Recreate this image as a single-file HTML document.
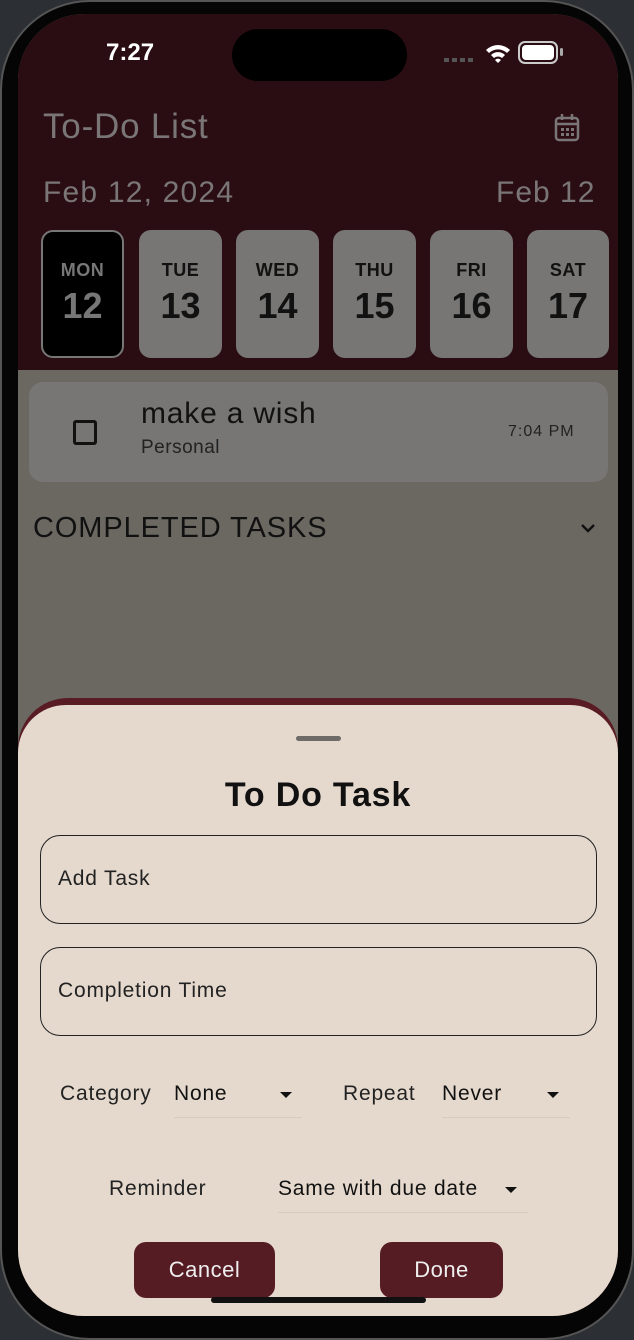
<!DOCTYPE html>
<html><head><meta charset="utf-8"><style>
*{margin:0;padding:0;box-sizing:border-box}
body{width:634px;height:1326px;overflow:hidden;background:#2c2f33;font-family:"Liberation Sans",sans-serif;position:relative}
.a{position:absolute}
#frame{left:0;top:0;width:634px;height:1340px;background:#050505;border-radius:90px;border:2px solid #555}
#screen{left:18px;top:14px;width:600px;height:1302px;border-radius:66px;overflow:hidden;background:#6b6861}
.day{position:absolute;top:216px;width:83px;height:128px;border-radius:12px;background:#777675;text-align:center;color:#111}
.day .d{font-size:18px;font-weight:bold;margin-top:30px;letter-spacing:.5px}
.day .n{font-size:36px;font-weight:bold;margin-top:4px}
.field{position:absolute;left:22px;width:557px;height:89px;border:1.5px solid #222;border-radius:20px;font-size:21px;color:#222;padding-left:17px;line-height:86px;letter-spacing:.8px}
.btn{position:absolute;top:1228px;height:56px;background:#561c24;border-radius:12px;color:#eee;font-size:22px;text-align:center;line-height:56px;letter-spacing:.5px}
.lab{position:absolute;font-size:21px;color:#222;letter-spacing:.8px}
.val{position:absolute;font-size:21px;color:#111;letter-spacing:.8px;border-bottom:1px solid #d6cbbf;height:36px}
.tri{position:absolute;width:0;height:0;border-left:6px solid transparent;border-right:6px solid transparent;border-top:6px solid #111}
</style></head><body>
<div id="frame" class="a"></div>
<div id="screen" class="a">
  <div class="a" style="left:0;top:0;width:600px;height:356px;background:#2a0d12"></div>
  <div class="a" style="left:214px;top:15px;width:175px;height:52px;border-radius:26px;background:#000"></div>
  <div class="a" style="left:88px;top:25px;font-size:24px;font-weight:bold;color:#fff">7:27</div>
  <div class="a" style="left:426px;top:44px;width:30px;height:4px;background:repeating-linear-gradient(90deg,#555 0 5px,transparent 5px 8px)"></div>
  <svg class="a" style="left:466px;top:28px" width="28" height="22" viewBox="0 0 28 22"><path d="M2 8 A17 17 0 0 1 26 8 L23 11 A13 13 0 0 0 5 11Z M7 13 A10 10 0 0 1 21 13 L18 16 A6 6 0 0 0 10 16Z M11 18 A4 4 0 0 1 17 18 L14 21Z" fill="#fff"/></svg>
  <div class="a" style="left:500px;top:27px;width:40px;height:23px;border:2px solid #ccc;border-radius:7px;padding:2px"><div style="width:100%;height:100%;background:#fff;border-radius:4px"></div></div>
  <div class="a" style="left:542px;top:34px;width:3px;height:8px;background:#aaa;border-radius:2px"></div>
  <div class="a" style="left:25px;top:93px;font-size:35px;color:#7a7677;letter-spacing:.8px">To-Do List</div>
  <svg class="a" style="left:535px;top:98px" width="30" height="32" viewBox="0 0 30 32" fill="none" stroke="#7a7677" stroke-width="2.5"><rect x="3" y="6" width="22" height="22" rx="3"/><path d="M3 12h22M9 2v6M19 2v6"/><g fill="#7a7677" stroke="none"><rect x="8" y="16" width="3" height="3"/><rect x="13" y="16" width="3" height="3"/><rect x="18" y="16" width="3" height="3"/><rect x="8" y="21" width="3" height="3"/><rect x="13" y="21" width="3" height="3"/><rect x="18" y="21" width="3" height="3"/></g></svg>
  <div class="a" style="left:25px;top:162px;font-size:30px;color:#7a7677;letter-spacing:1.2px">Feb 12, 2024</div>
  <div class="a" style="left:478px;top:162px;font-size:30px;color:#7a7677;letter-spacing:1px">Feb 12</div>
  <div class="day" style="left:23px;background:#000;border:2px solid #777;color:#777"><div class="d" style="margin-top:28px">MON</div><div class="n">12</div></div>
  <div class="day" style="left:121px"><div class="d">TUE</div><div class="n">13</div></div>
  <div class="day" style="left:218px"><div class="d">WED</div><div class="n">14</div></div>
  <div class="day" style="left:315px"><div class="d">THU</div><div class="n">15</div></div>
  <div class="day" style="left:412px"><div class="d">FRI</div><div class="n">16</div></div>
  <div class="day" style="left:509px;width:82px"><div class="d">SAT</div><div class="n">17</div></div>
  <div class="a" style="left:11px;top:368px;width:579px;height:100px;border-radius:14px;background:#777675"></div>
  <div class="a" style="left:55px;top:406px;width:24px;height:25px;border:3px solid #111;border-radius:3px"></div>
  <div class="a" style="left:123px;top:383px;font-size:30px;color:#111;letter-spacing:.8px">make a wish</div>
  <div class="a" style="left:123px;top:423px;font-size:19px;color:#222;letter-spacing:.5px">Personal</div>
  <div class="a" style="left:490px;top:409px;font-size:16px;color:#222;letter-spacing:1px">7:04 PM</div>
  <div class="a" style="left:15px;top:498px;font-size:29px;color:#111;letter-spacing:.9px">COMPLETED TASKS</div>
  <svg class="a" style="left:562px;top:508px" width="16" height="12" viewBox="0 0 16 12"><path d="M2 3l6 6 6-6" stroke="#111" stroke-width="2.5" fill="none"/></svg>
  <div class="a" style="left:0;top:684px;width:600px;height:700px;background:#5a1c24;border-radius:50px 50px 0 0"></div>
  <div class="a" style="left:0;top:691px;width:600px;height:700px;background:#e5d9cd;border-radius:48px 48px 0 0">
    <div class="a" style="left:278px;top:31px;width:45px;height:5px;border-radius:3px;background:#6e6a68"></div>
  </div>
  <div class="a" style="left:0;top:762px;width:600px;text-align:center;font-size:34px;font-weight:bold;color:#111;letter-spacing:.8px">To Do Task</div>
  <div class="field" style="top:821px">Add Task</div>
  <div class="field" style="top:933px">Completion Time</div>
  <div class="lab" style="left:42px;top:1068px">Category</div>
  <div class="val" style="left:156px;top:1068px;width:128px">None</div>
  <div class="tri" style="left:262px;top:1078px"></div>
  <div class="lab" style="left:325px;top:1068px">Repeat</div>
  <div class="val" style="left:424px;top:1068px;width:128px">Never</div>
  <div class="tri" style="left:529px;top:1078px"></div>
  <div class="lab" style="left:91px;top:1163px">Reminder</div>
  <div class="val" style="left:260px;top:1163px;width:250px">Same with due date</div>
  <div class="tri" style="left:487px;top:1173px"></div>
  <div class="btn" style="left:116px;width:141px">Cancel</div>
  <div class="btn" style="left:362px;width:123px">Done</div>
  <div class="a" style="left:193px;top:1283px;width:215px;height:6px;border-radius:3px;background:#111"></div>
</div>
</body></html>
